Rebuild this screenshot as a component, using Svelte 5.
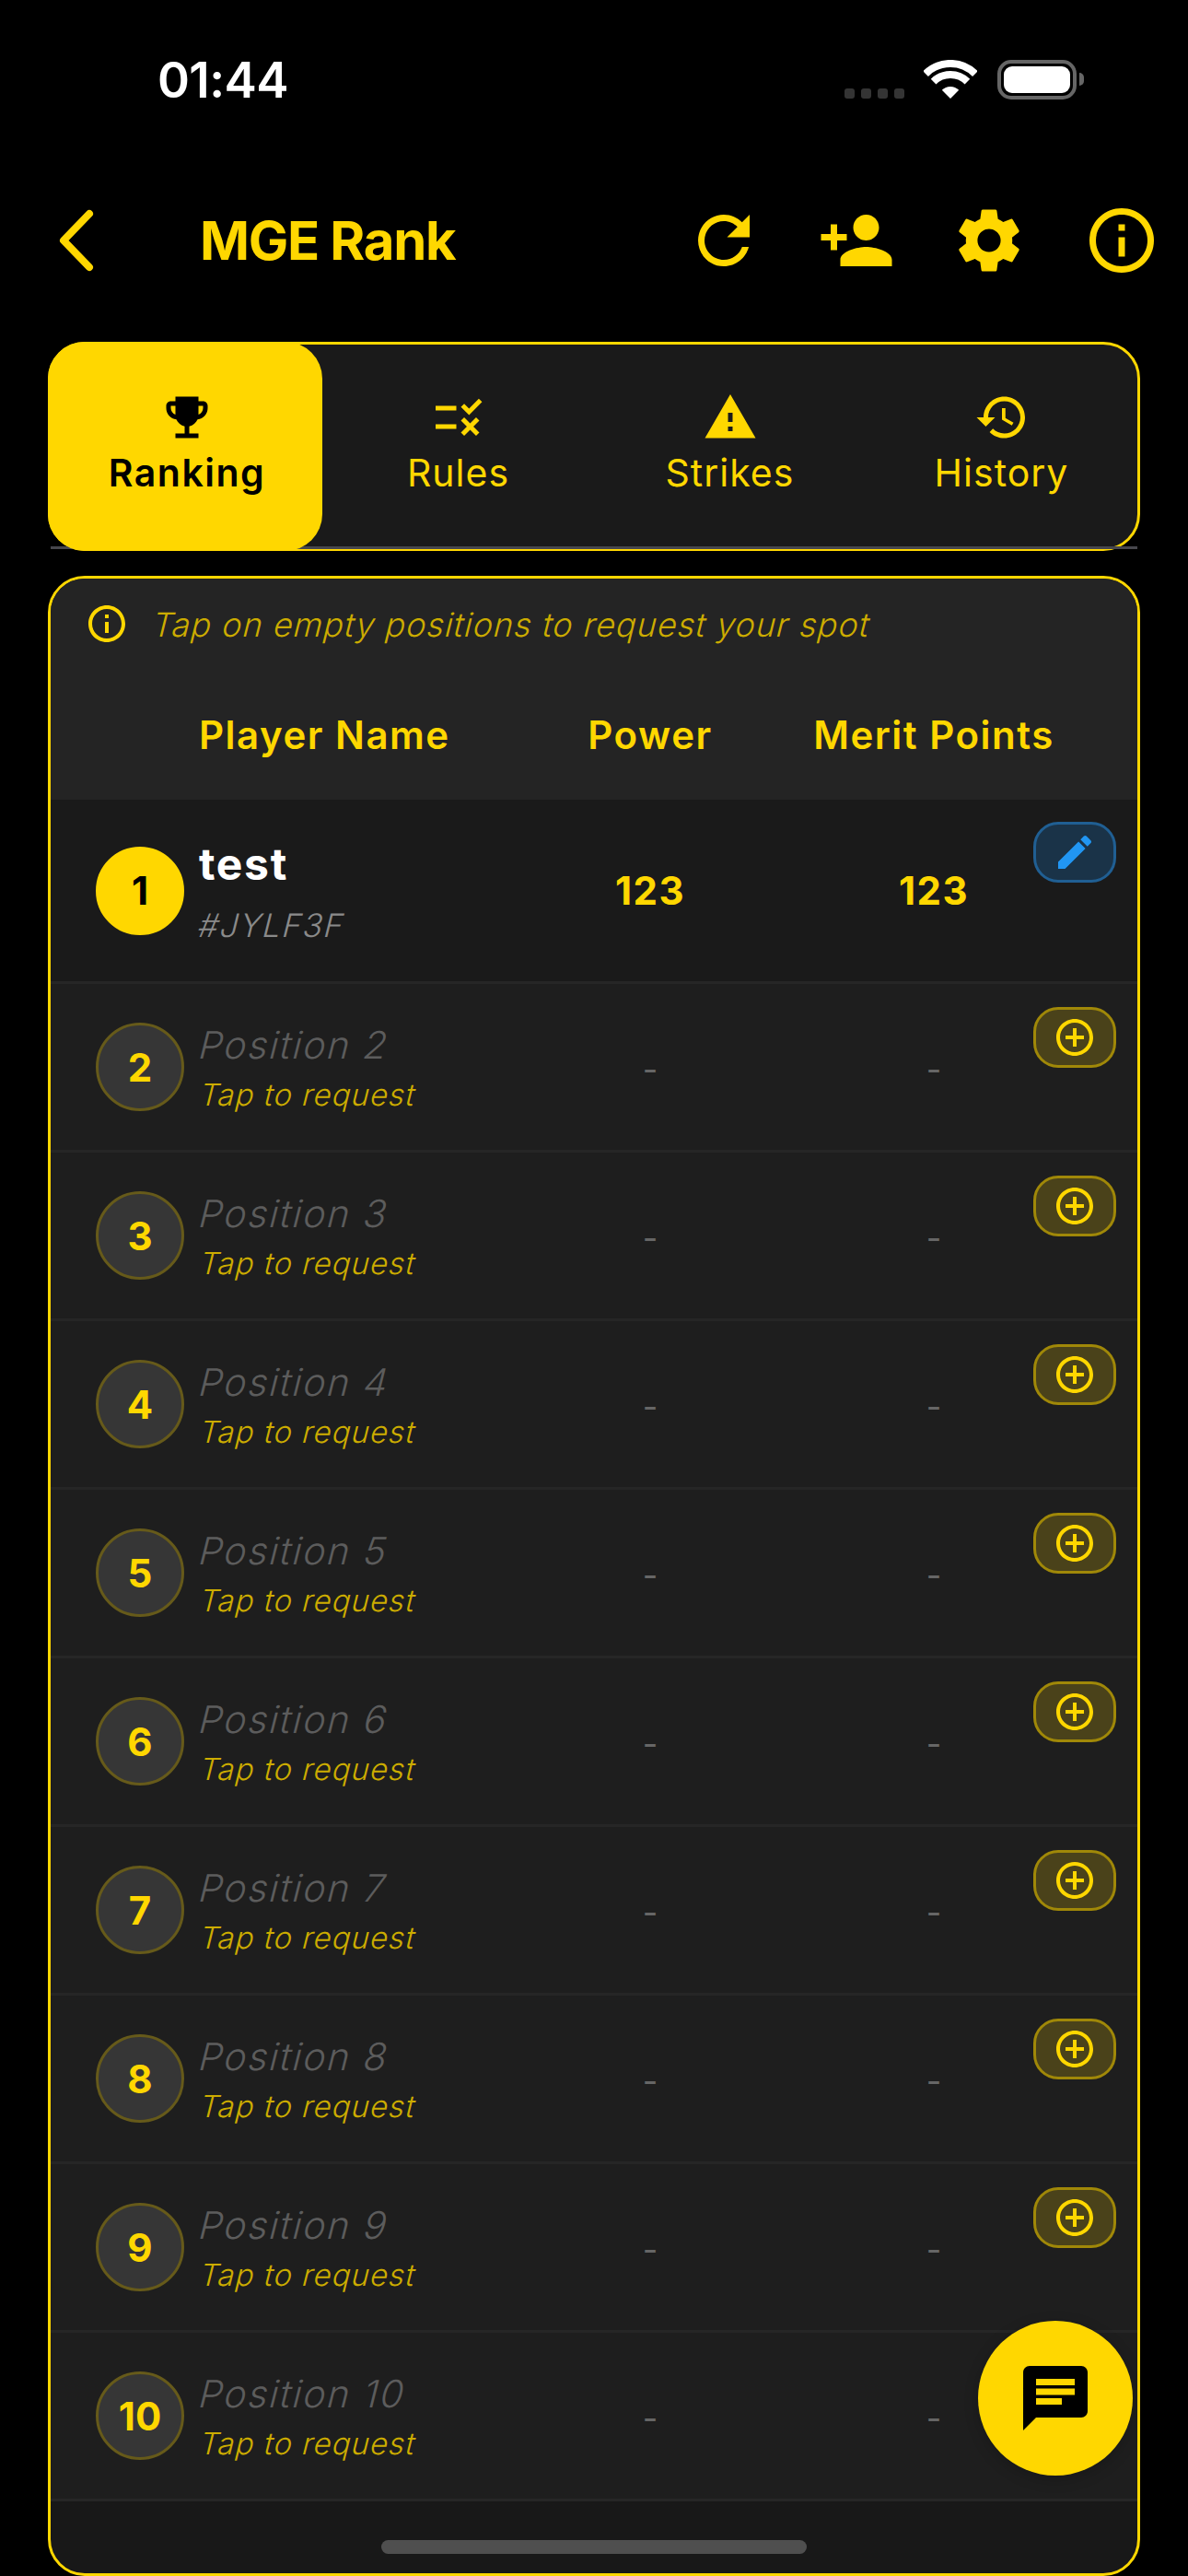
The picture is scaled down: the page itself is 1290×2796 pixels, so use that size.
<script>
  const icons = {
    refresh: 'M17.65 6.35C16.2 4.9 14.21 4 12 4c-4.42 0-7.99 3.58-7.99 8s3.57 8 7.99 8c3.73 0 6.84-2.55 7.73-6h-2.08c-.82 2.33-3.04 4-5.65 4-3.31 0-6-2.69-6-6s2.69-6 6-6c1.66 0 3.14.69 4.22 1.78L13 11h7V4l-2.35 2.35z',
    personAdd: 'M15 12c2.21 0 4-1.79 4-4s-1.79-4-4-4-4 1.79-4 4 1.79 4 4 4zm-9-2V7H4v3H1v2h3v3h2v-3h3v-2H6zm9 4c-2.67 0-8 1.34-8 4v2h16v-2c0-2.66-5.33-4-8-4z',
    settings: 'M19.14 12.94c.04-.3.06-.61.06-.94 0-.32-.02-.64-.07-.94l2.03-1.58c.18-.14.23-.41.12-.61l-1.92-3.32c-.12-.22-.37-.29-.59-.22l-2.39.96c-.5-.38-1.03-.7-1.62-.94l-.36-2.54c-.04-.24-.24-.41-.48-.41h-3.84c-.24 0-.43.17-.47.41l-.36 2.54c-.59.24-1.13.57-1.62.94l-2.39-.96c-.22-.08-.47 0-.59.22L2.74 8.87c-.12.21-.08.47.12.61l2.03 1.58c-.05.3-.09.63-.09.94s.02.64.07.94l-2.03 1.58c-.18.14-.23.41-.12.61l1.92 3.32c.12.22.37.29.59.22l2.39-.96c.5.38 1.03.7 1.62.94l.36 2.54c.05.24.24.41.48.41h3.84c.24 0 .44-.17.47-.41l.36-2.54c.59-.24 1.13-.56 1.62-.94l2.39.96c.22.08.47 0 .59-.22l1.92-3.32c.12-.22.07-.47-.12-.61l-2.01-1.58zM12 15.6c-1.98 0-3.6-1.62-3.6-3.6s1.62-3.6 3.6-3.6 3.6 1.62 3.6 3.6-1.62 3.6-3.6 3.6z',
    info: 'M11 7h2v2h-2zm0 4h2v6h-2zm1-9C6.48 2 2 6.48 2 12s4.48 10 10 10 10-4.48 10-10S17.52 2 12 2zm0 18c-4.41 0-8-3.59-8-8s3.59-8 8-8 8 3.59 8 8-3.59 8-8 8z',
    trophy: 'M19 5h-2V3H7v2H5c-1.1 0-2 .9-2 2v1c0 2.55 1.92 4.63 4.39 4.94.63 1.5 1.98 2.63 3.61 2.96V19H7v2h10v-2h-4v-3.1c1.63-.33 2.98-1.46 3.61-2.96C19.08 12.63 21 10.55 21 8V7c0-1.1-.9-2-2-2zM5 8V7h2v3.82C5.84 10.4 5 9.3 5 8zm14 0c0 1.3-.84 2.4-2 2.82V7h2v1z',
    rule: 'M16.54 11L13 7.46l1.41-1.41 2.12 2.12 4.24-4.24 1.41 1.41L16.54 11zM11 7H2v2h9V7zm10 6.41L19.59 12 17 14.59 14.41 12 13 13.41 15.59 16 13 18.59 14.41 20 17 17.41 19.59 20 21 18.59 18.41 16 21 13.41zM11 15H2v2h9v-2z',
    warning: 'M1 21h22L12 2 1 21zm12-3h-2v-2h2v2zm0-4h-2v-4h2v4z',
    history: 'M13 3c-4.97 0-9 4.03-9 9H1l3.89 3.89.07.14L9 12H6c0-3.87 3.13-7 7-7s7 3.13 7 7-3.13 7-7 7c-1.93 0-3.68-.79-4.94-2.06l-1.42 1.42C8.27 19.99 10.51 21 13 21c4.97 0 9-4.03 9-9s-4.03-9-9-9zm-1 5v5l4.28 2.54.72-1.21-3.5-2.08V8H12z',
    add: 'M13 7h-2v4H7v2h4v4h2v-4h4v-2h-4V7zm-1-5C6.48 2 2 6.48 2 12s4.48 10 10 10 10-4.48 10-10S17.52 2 12 2zm0 18c-4.41 0-8-3.59-8-8s3.59-8 8-8 8 3.59 8 8-3.59 8-8 8z',
    edit: 'M3 17.25V21h3.75L17.81 9.94l-3.75-3.75L3 17.25zM20.71 7.04c.39-.39.39-1.02 0-1.41l-2.34-2.34c-.39-.39-1.02-.39-1.41 0l-1.83 1.83 3.75 3.75 1.83-1.83z',
    chat: 'M20 2H4c-1.1 0-1.99.9-1.99 2L2 22l4-4h14c1.1 0 2-.9 2-2V4c0-1.1-.9-2-2-2zM6 9h12v2H6V9zm8 5H6v-2h8v2zm4-6H6V6h12v2z'
  };

  const tabs = [
    { label: 'Ranking', icon: icons.trophy, active: true },
    { label: 'Rules', icon: icons.rule },
    { label: 'Strikes', icon: icons.warning },
    { label: 'History', icon: icons.history }
  ];

  const empty = [2, 3, 4, 5, 6, 7, 8, 9, 10];
</script>

<div class="screen">
  <div class="status">
    <span class="time">01:44</span>
    <div class="status-right">
      <div class="signal"><i></i><i></i><i></i><i></i></div>
      <svg class="wifi" width="58" height="42" viewBox="0 0 58 42">
        <path d="M2.1 15.1A38 38 0 0 1 55.9 15.1" fill="none" stroke="#fff" stroke-width="8" />
        <path d="M10.6 23.6A26 26 0 0 1 47.4 23.6" fill="none" stroke="#fff" stroke-width="8" />
        <path d="M29 42L19.8 32.8A13 13 0 0 1 38.2 32.8Z" fill="#fff" />
      </svg>
      <div class="battery"><div class="level"></div></div>
      <div class="nub"></div>
    </div>
  </div>

  <div class="nav">
    <svg class="back" width="44" height="72" viewBox="0 0 44 72">
      <polyline points="35,7 7,36 35,65" fill="none" stroke="#ffd700" stroke-width="8" stroke-linecap="round" stroke-linejoin="round" />
    </svg>
    <h1>MGE Rank</h1>
    <div class="actions">
      {#each [icons.refresh, icons.personAdd, icons.settings, icons.info] as d}
        <svg width="84" height="84" viewBox="0 0 24 24" fill="#ffd700"><path {d} /></svg>
      {/each}
    </div>
  </div>

  <div class="tabs">
    <div class="tab-row">
      {#each tabs as tab}
        <div class="tab" class:active={tab.active}>
          <svg width="60" height="60" viewBox="0 0 24 24" fill="currentColor"><path d={tab.icon} /></svg>
          <span>{tab.label}</span>
        </div>
      {/each}
    </div>
  </div>

  <div class="card">
    <div class="hint">
      <svg width="48" height="48" viewBox="0 0 24 24" fill="#ffd700"><path d={icons.info} /></svg>
      <span class="slant">Tap on empty positions to request your spot</span>
    </div>
    <div class="cols head">
      <span></span>
      <span class="name-head">Player Name</span>
      <span>Power</span>
      <span>Merit Points</span>
    </div>

    <div class="cols row first">
      <div class="rank-cell"><div class="badge filled">1</div></div>
      <div class="player">
        <div class="player-name">test</div>
        <div class="player-tag slant">#JYLF3F</div>
      </div>
      <div class="stat">123</div>
      <div class="stat">123</div>
      <div class="row-btn edit">
        <svg width="48" height="48" viewBox="0 0 24 24" fill="#2196f3"><path d={icons.edit} /></svg>
      </div>
    </div>

    {#each empty as n}
      <div class="cols row">
        <div class="rank-cell"><div class="badge">{n}</div></div>
        <div class="player">
          <div class="pos slant">Position {n}</div>
          <div class="req slant">Tap to request</div>
        </div>
        <div class="dash">-</div>
        <div class="dash">-</div>
        <div class="row-btn">
          <svg width="48" height="48" viewBox="0 0 24 24" fill="#ffd700"><path d={icons.add} /></svg>
        </div>
      </div>
    {/each}
  </div>

  <div class="fab">
    <svg width="84" height="84" viewBox="0 0 24 24" fill="#000"><path d={icons.chat} /></svg>
  </div>
  <div class="home"></div>
</div>

<style>
  :global(body) {
    margin: 0;
    background: #000;
  }

  .screen {
    position: relative;
    display: flex;
    flex-direction: column;
    width: 1290px;
    height: 2796px;
    overflow: hidden;
    background: #000;
    font-family: Inter, "Noto Sans", sans-serif;
    color: #ffd700;
  }

  /* Status bar */

  .status {
    display: flex;
    align-items: center;
    justify-content: space-between;
    height: 172px;
    padding: 0 113px 0 171px;
    flex: none;
  }

  .time {
    margin-top: 2px;
    font-size: 53px;
    font-weight: 600;
    letter-spacing: -0.6px;
    color: #fff;
  }

  .status-right {
    display: flex;
    align-items: center;
  }

  .signal {
    display: flex;
    gap: 7px;
    margin-right: 21px;
    align-self: flex-end;
    margin-bottom: 1px;
  }

  .signal i {
    width: 11px;
    height: 11px;
    border-radius: 3px;
    background: #343434;
  }

  .wifi {
    margin-right: 22px;
  }

  .battery {
    box-sizing: border-box;
    width: 86px;
    height: 43px;
    padding: 3px;
    border: 4px solid #666;
    border-radius: 15px;
  }

  .level {
    height: 100%;
    border-radius: 9px;
    background: #fff;
  }

  .nub {
    width: 5px;
    height: 14px;
    margin-left: 3px;
    border-radius: 0 5px 5px 0;
    background: #666;
  }

  /* Nav */

  .nav {
    display: flex;
    align-items: center;
    height: 178px;
    padding: 0 30px 0 62px;
    flex: none;
  }

  .back {
    margin-right: 111px;
  }

  h1 {
    margin: 0;
    font-size: 58px;
    font-weight: 700;
    letter-spacing: -1.3px;
  }

  .actions {
    display: flex;
    gap: 60px;
    margin-left: auto;
  }

  /* Tabs */

  .tabs {
    box-sizing: border-box;
    flex: none;
    width: 1186px;
    height: 227px;
    margin: 21px 0 0 52px;
    border: 3px solid #ffd700;
    border-radius: 40px;
    background: #1a1a1a;
  }

  .tab-row {
    display: flex;
    height: 219px;
    border-bottom: 3px solid #47474d;
  }

  .tab {
    display: flex;
    flex-direction: column;
    align-items: center;
    flex: 1;
    padding-top: 49px;
    font-size: 41px;
    font-weight: 400;
    letter-spacing: 1px;
    line-height: 50px;
  }

  .tab span {
    margin-top: 5px;
  }

  .tab.active {
    position: relative;
    box-sizing: border-box;
    flex: none;
    width: 298px;
    height: 227px;
    margin: -3px 0 0 -3px;
    padding: 52px 0 0 4px;
    border-radius: 40px;
    background: #ffd700;
    color: #000;
    font-weight: 600;
    letter-spacing: 1.5px;
  }

  /* Card */

  .card {
    box-sizing: border-box;
    flex: 1;
    width: 1186px;
    margin: 27px 0 0 52px;
    border: 3px solid #ffd700;
    border-radius: 40px;
    overflow: hidden;
    background: #181818;
  }

  /* upright Inter leaned over, the face in the reference is a sheared one */
  .slant {
    display: block;
    transform: skewX(-14deg);
    transform-origin: left bottom;
  }

  .hint {
    display: flex;
    align-items: center;
    gap: 21px;
    height: 98px;
    padding-left: 37px;
    background: #242424;
    font-size: 36px;
    font-weight: 300;
    letter-spacing: 1px;
    color: #ccac00;
  }

  .hint .slant {
    margin-top: 2px;
  }

  .cols {
    display: grid;
    grid-template-columns: 161px 370px 240px 376px;
    align-items: center;
    text-align: center;
  }

  .head {
    height: 142px;
    background: #242424;
    font-size: 42px;
    font-weight: 600;
    letter-spacing: 1.5px;
  }

  .name-head {
    text-align: left;
  }

  .row {
    position: relative;
    box-sizing: border-box;
    height: 183px;
    border-bottom: 3px solid #262626;
    background: #1e1e1e;
  }

  .row.first {
    height: 200px;
    background: #1a1a1a;
  }

  .rank-cell {
    display: flex;
    justify-content: flex-start;
    padding-left: 49px;
  }

  .badge {
    box-sizing: border-box;
    display: flex;
    align-items: center;
    justify-content: center;
    width: 96px;
    height: 96px;
    border: 3px solid #665a1a;
    border-radius: 50%;
    background: #363636;
    font-size: 42px;
    font-weight: 700;
  }

  .badge.filled {
    border-color: #ffd700;
    background: #ffd700;
    color: #000;
  }

  .player {
    text-align: left;
  }

  .player-name {
    font-size: 48px;
    font-weight: 700;
    letter-spacing: 1.7px;
    color: #fff;
  }

  .player-tag {
    margin: 16px 0 0 -5px;
    font-size: 35px;
    font-weight: 300;
    letter-spacing: 1.6px;
    color: #8a8a8a;
  }

  .pos {
    margin-left: -5px;
    font-size: 41px;
    font-weight: 300;
    letter-spacing: 1.8px;
    color: #5c5c5c;
  }

  .req {
    margin: 9px 0 0 -3px;
    font-size: 33px;
    font-weight: 300;
    letter-spacing: 1px;
    color: #ccac00;
  }

  .stat {
    font-size: 42px;
    font-weight: 700;
    letter-spacing: 1.4px;
  }

  .dash {
    padding-top: 6px;
    font-size: 36px;
    color: #666;
  }

  .row-btn {
    position: absolute;
    top: 25px;
    right: 23px;
    box-sizing: border-box;
    display: flex;
    align-items: center;
    justify-content: center;
    width: 90px;
    height: 66px;
    border: 3px solid #a08808;
    border-radius: 27px;
    background: #4a421a;
  }

  .row-btn.edit {
    top: 24px;
    border-color: #205f93;
    background: #1a3348;
  }

  /* Floating bits */

  .fab {
    position: absolute;
    left: 1062px;
    top: 2519px;
    display: flex;
    align-items: center;
    justify-content: center;
    width: 168px;
    height: 168px;
    border-radius: 50%;
    background: #ffd700;
    box-shadow: 0 4px 16px rgba(0, 0, 0, 0.2);
  }

  .home {
    position: absolute;
    left: 414px;
    top: 2757px;
    width: 462px;
    height: 15px;
    border-radius: 8px;
    background: #4f4f4f;
  }
</style>
